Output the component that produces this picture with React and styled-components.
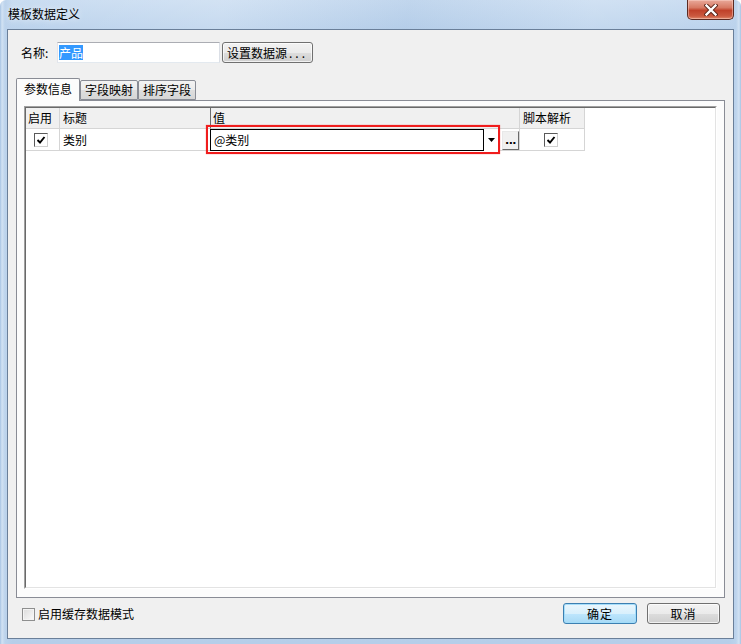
import React from 'react';
import styled, { createGlobalStyle } from 'styled-components';

const GlobalStyle = createGlobalStyle`
  html, body { margin: 0; padding: 0; background: #ffffff; }
  body {
    font-family: "Noto Sans CJK SC", "Microsoft YaHei", sans-serif;
    font-size: 12px;
    color: #000;
  }
  * { box-sizing: border-box; }
`;

const Window = styled.div`
  width: 741px;
  height: 644px;
  display: flex;
  flex-direction: column;
  border-radius: 6px 6px 0 0;
  background:
    linear-gradient(90deg, #a6c3e3 0px, #d2e2f3 2px, #bcd3ec 5px, rgba(190,212,236,0) 12px),
    linear-gradient(270deg, #a6c3e3 0px, #d2e2f3 2px, #bcd3ec 5px, rgba(190,212,236,0) 12px),
    linear-gradient(180deg, #c9dcf1 0px, #bad2ec 29px, #c3d8ee 60%, #b6cee9 100%);
  overflow: hidden;
`;

const TitleBar = styled.div`
  height: 29px;
  display: flex;
  align-items: flex-start;
  padding-left: 8px;
  padding-right: 7px;
  background: linear-gradient(100deg, rgba(255,255,255,0.0) 0%, rgba(255,255,255,0.18) 30%, rgba(150,180,215,0.15) 55%, rgba(255,255,255,0.15) 80%, rgba(255,255,255,0) 100%);
`;

const Title = styled.div`
  font-size: 12px;
  line-height: 16px;
  margin-top: 6px;
  color: #000;
  text-shadow: 0 0 6px rgba(255,255,255,0.9);
`;

const CloseButton = styled.div`
  margin-left: auto;
  width: 47px;
  height: 20px;
  border: 1px solid #5b2a22;
  border-top: none;
  border-radius: 0 0 5px 5px;
  background: linear-gradient(180deg, #e9a99a 0%, #d77a64 40%, #c0412a 55%, #cb5a40 85%, #e08a6c 100%);
  box-shadow: inset 0 0 0 1px rgba(255,220,210,0.45);
  display: flex;
  align-items: center;
  justify-content: center;
`;

const Frame = styled.div`
  flex: 1;
  display: flex;
  padding: 0 7px 5px 7px;
`;

const Client = styled.div`
  flex: 1;
  display: flex;
  flex-direction: column;
  background: #f0f0f0;
  border: 1px solid #6a7f99;
`;

const NameRow = styled.div`
  display: flex;
  align-items: center;
  margin-top: 12px;
  padding-left: 13px;
  height: 21px;
`;

const Label = styled.div`
  width: 36px;
  line-height: 16px;
`;

const TextBox = styled.div`
  width: 163px;
  height: 21px;
  border: 1px solid #abadb3;
  border-color: #abadb3 #dbdfe6 #e3e9ef #e2e3ea;
  background: #fff;
  padding-left: 1px;
  display: flex;
  align-items: center;
`;

const Selected = styled.span`
  background: #3399ff;
  color: #fff;
  line-height: 15px;
`;

const Button = styled.div`
  width: ${p => p.$w}px;
  height: 21px;
  margin-left: ${p => p.$ml || 0}px;
  border: 1px solid ${p => (p.$default ? '#3c7fb1' : '#707070')};
  border-radius: 3px;
  background: ${p =>
    p.$default
      ? 'linear-gradient(180deg, #eaf6fd 0%, #d9f0fc 50%, #bee6fd 51%, #a7d9f5 100%)'
      : 'linear-gradient(180deg, #f2f2f2 0%, #ebebeb 50%, #dddddd 51%, #cfcfcf 100%)'};
  box-shadow: inset 0 0 0 1px ${p => (p.$default ? 'rgba(160,220,250,0.9)' : 'rgba(255,255,255,0.7)')};
  display: flex;
  align-items: center;
  justify-content: center;
  line-height: 15px;
  letter-spacing: ${p => p.$ls || 0}px;
`;

const Dots = styled.span`
  letter-spacing: 3px;
  margin-left: 2px;
`;

const TabStrip = styled.div`
  display: flex;
  align-items: flex-end;
  height: 22px;
  margin: 15px 8px 0 8px;
  position: relative;
  z-index: 1;
`;

const Tab = styled.div`
  width: ${p => p.$w}px;
  height: ${p => (p.$active ? 23 : 20)}px;
  margin-bottom: ${p => (p.$active ? -1 : 0)}px;
  border: 1px solid #898c95;
  border-bottom: ${p => (p.$active ? 'none' : '1px solid #898c95')};
  border-radius: 2px 2px 0 0;
  background: ${p => (p.$active ? '#fcfcfc' : 'linear-gradient(180deg, #f3f3f3 0%, #ebebeb 50%, #dedede 51%, #d6d6d6 100%)')};
  display: flex;
  justify-content: center;
  padding-top: ${p => (p.$active ? 2 : 1)}px;
  line-height: 16px;
  font-size: 12px;
`;

const Panel = styled.div`
  flex: 1;
  margin: 0 8px;
  border: 1px solid #898c95;
  background: #fcfcfc;
  padding: 5px 7px 8px 7px;
  display: flex;
`;

const GridOuter = styled.div`
  flex: 1;
  display: flex;
  border: 1px solid;
  border-color: #a0a0a0 #ffffff #ffffff #a0a0a0;
`;

const GridInner = styled.div`
  flex: 1;
  border: 1px solid;
  border-color: #696969 #e3e3e3 #e3e3e3 #696969;
  background: #ffffff;
`;

const Rows = styled.div`
  display: grid;
  grid-template-columns: 34px 151px 309px 65px;
  width: 559px;
`;

const HeadCell = styled.div`
  height: 21px;
  background: #f0f0f0;
  border-right: 1px solid ${p => (p.$dark ? '#6d6d6d' : '#d5d5d5')};
  border-bottom: 1px solid #d5d5d5;
  padding-left: ${p => p.$pl ?? 3}px;
  line-height: 16px;
  padding-top: 2px;
  white-space: nowrap;
`;

const Cell = styled.div`
  height: 22px;
  border-right: 1px solid #d5d5d5;
  border-bottom: 1px solid #d5d5d5;
  padding-left: ${p => p.$pl ?? 3}px;
  display: flex;
  align-items: center;
  line-height: 16px;
  position: relative;
`;

const GridCheck = styled.div`
  width: 14px;
  height: 14px;
  border: 1px solid;
  border-color: #5a5a5a #d0d0d0 #d0d0d0 #5a5a5a;
  background: #fff;
  display: flex;
  align-items: center;
  justify-content: center;
`;

const Combo = styled.div`
  display: flex;
  align-items: stretch;
  margin: -1px 0 -1px -4px;
  height: 22px;
`;

const ComboText = styled.div`
  width: 274px;
  border: 1px solid #000;
  padding-left: 3px;
  display: flex;
  align-items: center;
  background: #fff;
`;

const ComboArrow = styled.div`
  width: 14px;
  display: flex;
  align-items: center;
  justify-content: center;
  background: #fff;
`;

const EllipsisButton = styled.div`
  width: 17px;
  height: 19px;
  margin: 2px 0 0 4px;
  border: 1px solid;
  border-color: #e8e8e8 #6a6a6a #6a6a6a #e8e8e8;
  background: #f0f0f0;
  display: flex;
  align-items: flex-end;
  justify-content: center;
  font-size: 11px;
  line-height: 12px;
  font-weight: bold;
  letter-spacing: -0.5px;
  padding-bottom: 2px;
  font-family: "DejaVu Sans", sans-serif;
`;

const Highlight = styled.div`
  position: absolute;
  left: -5px;
  top: -4px;
  width: 294px;
  height: 29px;
  border: 2px solid #f01d1d;
  box-shadow: 0 0 1px rgba(240, 29, 29, 0.6);
  pointer-events: none;
`;

const BottomBar = styled.div`
  height: 40px;
  display: flex;
  align-items: flex-start;
  padding: 5px 13px 0 14px;
`;

const CheckLine = styled.div`
  display: flex;
  align-items: center;
  gap: 3px;
  margin-top: 3px;
  line-height: 16px;
`;

const PlainCheck = styled.div`
  width: 13px;
  height: 13px;
  border: 1px solid #8e8f8f;
  background: linear-gradient(135deg, #dcdcdc 0%, #eeeeee 60%, #fbfbfb 100%);
  box-shadow: inset 0 0 0 1px #f4f4f4;
`;

const Spacer = styled.div`
  flex: 1;
`;

const CheckMark = () => (
  <svg width="10" height="10" viewBox="0 0 10 10">
    <polyline points="1.5,5 4,7.5 8.5,2" fill="none" stroke="#000" strokeWidth="1.9" />
  </svg>
);

const CloseGlyph = () => (
  <svg width="14" height="12" viewBox="0 0 14 12">
    <path d="M2.5 1.5 L11.5 10.5 M11.5 1.5 L2.5 10.5" stroke="#5a2418" strokeWidth="4.2" strokeLinecap="square" />
    <path d="M2.5 1.5 L11.5 10.5 M11.5 1.5 L2.5 10.5" stroke="#ffffff" strokeWidth="2.4" strokeLinecap="square" />
  </svg>
);

const DownTriangle = () => (
  <svg width="7" height="4" viewBox="0 0 7 4">
    <polygon points="0,0 7,0 3.5,4" fill="#000" />
  </svg>
);

export default function App() {
  return (
    <>
      <GlobalStyle />
      <Window>
        <TitleBar>
          <Title>模板数据定义</Title>
          <CloseButton>
            <CloseGlyph />
          </CloseButton>
        </TitleBar>
        <Frame>
          <Client>
            <NameRow>
              <Label>名称:</Label>
              <TextBox>
                <Selected>产品</Selected>
              </TextBox>
              <Button $w={91} $ml={2}>
                设置数据源<Dots>...</Dots>
              </Button>
            </NameRow>
            <TabStrip>
              <Tab $active $w={64}>参数信息</Tab>
              <Tab $w={58}>字段映射</Tab>
              <Tab $w={58}>排序字段</Tab>
            </TabStrip>
            <Panel>
              <GridOuter>
                <GridInner>
                  <Rows>
                    <HeadCell $pl={2}>启用</HeadCell>
                    <HeadCell $dark>标题</HeadCell>
                    <HeadCell $pl={2}>值</HeadCell>
                    <HeadCell $pl={3}>脚本解析</HeadCell>

                    <Cell $pl={8}>
                      <GridCheck>
                        <CheckMark />
                      </GridCheck>
                    </Cell>
                    <Cell>类别</Cell>
                    <Cell $pl={3}>
                      <Combo>
                        <ComboText>@类别</ComboText>
                        <ComboArrow>
                          <DownTriangle />
                        </ComboArrow>
                        <EllipsisButton>...</EllipsisButton>
                      </Combo>
                      <Highlight />
                    </Cell>
                    <Cell $pl={24}>
                      <GridCheck>
                        <CheckMark />
                      </GridCheck>
                    </Cell>
                  </Rows>
                </GridInner>
              </GridOuter>
            </Panel>
            <BottomBar>
              <CheckLine>
                <PlainCheck />
                <span>启用缓存数据模式</span>
              </CheckLine>
              <Spacer />
              <Button $w={74} $default $ls={1}>确定</Button>
              <Button $w={73} $ml={10} $ls={1}>取消</Button>
            </BottomBar>
          </Client>
        </Frame>
      </Window>
    </>
  );
}
